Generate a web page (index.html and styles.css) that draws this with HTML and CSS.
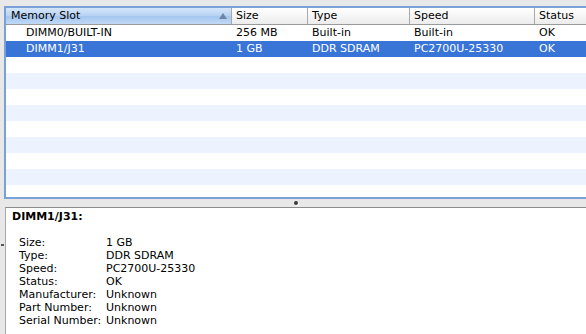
FILE: index.html
```html
<!DOCTYPE html>
<html lang="en">

<head>
    <meta charset="UTF-8">
    <meta name="viewport" content="width=device-width, initial-scale=1.0">
    <title>Memory</title>
    <link rel="stylesheet" href="styles.css">
</head>

<body>
    <div class="window">
        <div class="table-pane">
            <div class="header">
                <div class="col c1 sorted">Memory Slot <span class="sort-arrow"></span></div>
                <div class="col c2">Size</div>
                <div class="col c3">Type</div>
                <div class="col c4">Speed</div>
                <div class="col c5">Status</div>
            </div>
            <div class="rows">
                <div class="row">
                    <div class="cell c1 indent">DIMM0/BUILT-IN</div>
                    <div class="cell c2">256 MB</div>
                    <div class="cell c3">Built-in</div>
                    <div class="cell c4">Built-in</div>
                    <div class="cell c5">OK</div>
                </div>
                <div class="row selected">
                    <div class="cell c1 indent">DIMM1/J31</div>
                    <div class="cell c2">1 GB</div>
                    <div class="cell c3">DDR SDRAM</div>
                    <div class="cell c4">PC2700U-25330</div>
                    <div class="cell c5">OK</div>
                </div>
                <div class="row"></div>
                <div class="row stripe"></div>
                <div class="row"></div>
                <div class="row stripe"></div>
                <div class="row"></div>
                <div class="row stripe"></div>
                <div class="row"></div>
                <div class="row stripe"></div>
                <div class="row"></div>
            </div>
        </div>

        <div class="splitter"><span class="dimple"></span></div>

        <div class="detail-pane">
            <div class="detail-title">DIMM1/J31:</div>
            <dl class="details">
                <dt>Size:</dt><dd>1 GB</dd>
                <dt>Type:</dt><dd>DDR SDRAM</dd>
                <dt>Speed:</dt><dd>PC2700U-25330</dd>
                <dt>Status:</dt><dd>OK</dd>
                <dt>Manufacturer:</dt><dd>Unknown</dd>
                <dt>Part Number:</dt><dd>Unknown</dd>
                <dt>Serial Number:</dt><dd>Unknown</dd>
            </dl>
        </div>

        <span class="edge-mark"></span>
    </div>
</body>

</html>
```

FILE: styles.css
```css
body {
    margin: 0;
    background-color: #e8e8e8;
    font-family: "DejaVu Sans", "Lucida Grande", sans-serif;
    font-size: 11px;
    color: #000;
    overflow: hidden;
}

.window {
    position: relative;
    width: 586px;
    height: 334px;
    padding-top: 6px;
    box-sizing: border-box;
}

.table-pane {
    margin-left: 4px;
    height: 193px;
    box-sizing: border-box;
    border: 2px solid #7aa1d7;
    border-right: none;
    background-color: #fff;
    overflow: hidden;
}

.header,
.row {
    display: grid;
    grid-template-columns: 226px 76px 102px 125px 1fr;
}

.header {
    height: 17px;
    box-sizing: border-box;
    border-bottom: 1px solid #9a9a9a;
    background: linear-gradient(#ffffff, #ececec);
}

.col {
    position: relative;
    line-height: 16px;
    padding-left: 4px;
    border-right: 1px solid #a9a9a9;
    white-space: nowrap;
}

.col.c1 {
    padding-left: 5px;
}

.col.sorted {
    background: linear-gradient(#d6e6f9, #b6d1f3 50%, #a4c6ef 51%, #c0d8f6);
}

.sort-arrow {
    position: absolute;
    right: 4px;
    top: 5px;
    width: 0;
    height: 0;
    border-left: 4px solid transparent;
    border-right: 4px solid transparent;
    border-bottom: 6px solid #6f84a4;
}

.col.c5 {
    border-right: none;
}

.row {
    height: 16px;
    line-height: 16px;
}

.row.stripe {
    background-color: #edf3fe;
}

.row.selected {
    background-color: #3875d7;
    color: #fff;
}

.cell {
    padding-left: 4px;
    white-space: nowrap;
}

.cell.c2 {
    padding-left: 4px;
}

.cell.indent {
    padding-left: 20px;
}

.splitter {
    position: relative;
    height: 8px;
}

.dimple {
    position: absolute;
    left: 294px;
    top: 2px;
    width: 4px;
    height: 4px;
    border-radius: 50%;
    background-color: #3a3a3a;
    box-shadow: 1px 1px 0 #ffffff;
}

.detail-pane {
    margin-left: 5px;
    height: 130px;
    border-top: 1px solid #8c8c8c;
    border-left: 1px solid #a8a8a8;
    background-color: #fff;
    padding: 2px 0 0 6px;
    line-height: 13px;
}

.detail-title {
    font-weight: bold;
    margin-bottom: 13px;
}

.details {
    display: grid;
    grid-template-columns: 87px 1fr;
    margin: 0 0 0 7px;
}

.details dt,
.details dd {
    margin: 0;
    white-space: nowrap;
}

.edge-mark {
    position: absolute;
    left: 1px;
    top: 244px;
    width: 3px;
    height: 2px;
    background-color: #555;
}
```
